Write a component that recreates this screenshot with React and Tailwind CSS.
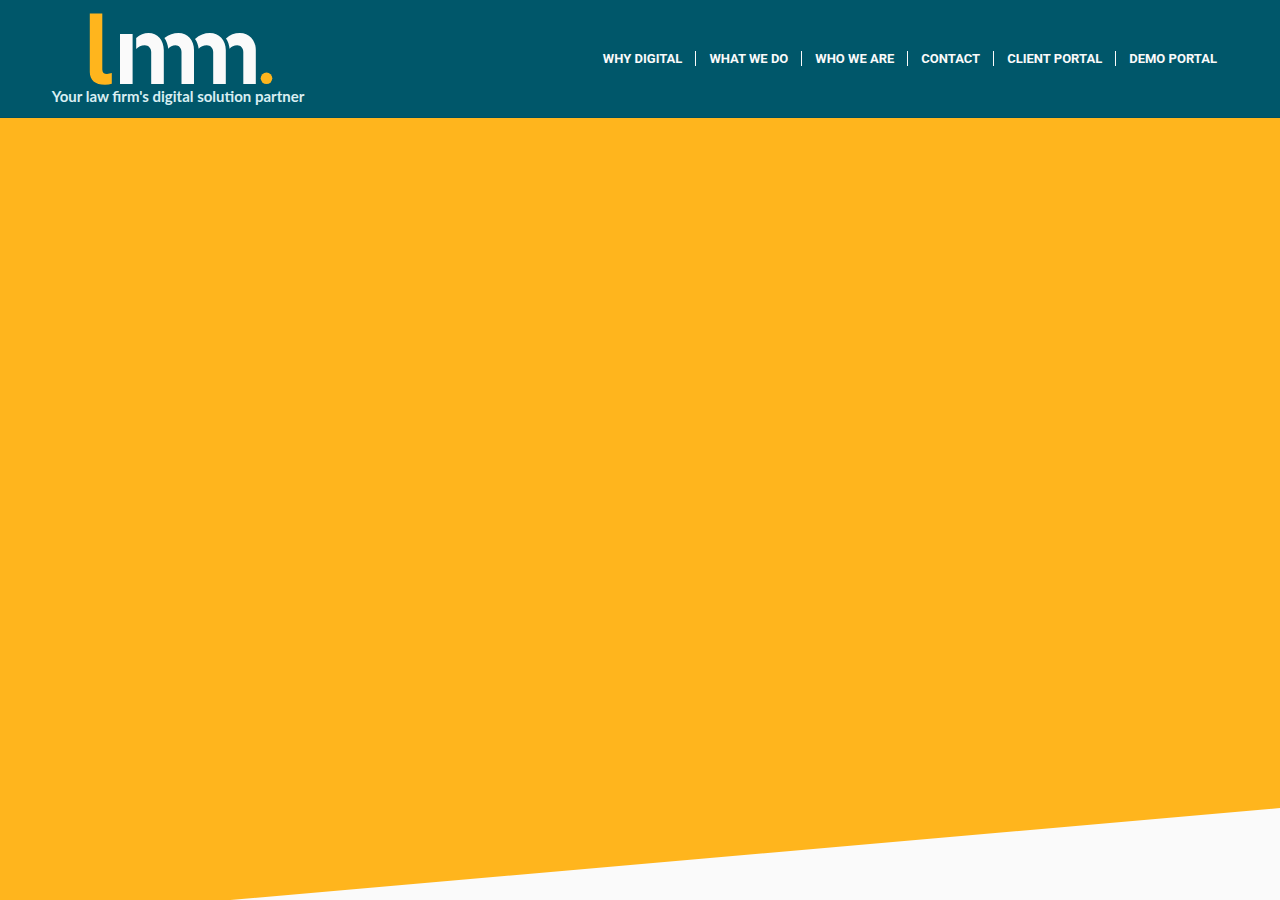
const links = [
  { label: "WHY DIGITAL", href: "#why-digital" },
  { label: "WHAT WE DO", href: "#what-we-do" },
  { label: "WHO WE ARE", href: "#who-we-are" },
  { label: "CONTACT", href: "#contact" },
  { label: "CLIENT PORTAL", href: "#client-portal" },
  { label: "DEMO PORTAL", href: "#demo-portal" },
];

function Logo() {
  return (
    <a href="#home" className="flex w-64 shrink-0 flex-col items-center">
      <svg viewBox="85 12 186 74" className="h-[74px] w-[186px] overflow-visible" aria-hidden="true">
        <path
          d="M89.8 13.5H102.3V69.5C102.3 72.5 104 74 107 74L111.8 73V83.8Q109 84.8 105 84.8C95 84.8 89.8 80 89.8 72Z"
          fill="#ffb51d"
        />
        <g fill="#fafafa">
          <rect x="120" y="34" width="12.6" height="50" />
          <path d="M136.2 38C140 34.5 144 33 148.5 33C157.5 33 163.8 40 163.8 50V84H151.2V52C151.2 48 148.5 45.2 144.8 45.2C141 45.2 138.5 46.5 136.2 49Z" />
          <path d="M164.4 38C169 34.5 173.5 33 178.5 33C187.5 33 194 40 194 50V84H181.5V52C181.5 48 179 45.2 175.5 45.2C172.5 45.2 170 46.5 168.3 48.7C167.8 44.5 166.5 41 164.4 38Z" />
          <path d="M195 39C199.5 34.8 204.5 33 209.8 33C219 33 225.8 40 225.8 50V84H213.2V52C213.2 48 210.5 45.2 206.8 45.2C203.5 45.2 200.5 46.5 198.7 48.7C198.2 45 197 41.5 195 39Z" />
          <path d="M226 38.5C230 34.8 234.5 33 239.8 33C249 33 255.8 40 255.8 50V84H243.3V52C243.3 48 240.8 45.2 237.2 45.2C234 45.2 231.3 46.5 229.6 48.7C229.2 45 228 41.5 226 38.5Z" />
        </g>
        <circle cx="266.5" cy="78.3" r="5.8" fill="#ffb51d" />
      </svg>
      <span className="whitespace-nowrap font-['Lato',sans-serif] text-[15px] leading-5 font-bold text-[#d9eef2]">
        Your law firm&apos;s digital solution partner
      </span>
    </a>
  );
}

function Header() {
  return (
    <header className="flex min-h-[118px] items-center justify-between border-b border-[#005062] bg-[#00576a] px-[50px]">
      <Logo />
      <nav aria-label="Main">
        <ul className="flex flex-wrap items-center divide-x divide-[#fafafa]">
          {links.map((link) => (
            <li key={link.label} className="flex px-[13px]">
              <a
                href={link.href}
                className="font-['Roboto',sans-serif] text-[13px] leading-[15px] font-bold whitespace-nowrap text-[#fafafa] hover:text-[#ffb51d]"
              >
                {link.label}
              </a>
            </li>
          ))}
        </ul>
      </nav>
    </header>
  );
}

export default function App() {
  return (
    <div className="flex min-h-screen flex-col bg-[#fafafa]">
      <Header />
      <main className="flex flex-1 flex-col justify-end bg-[#ffb51d]">
        {/* slanted edge of the next section */}
        <div className="h-23 bg-[#fafafa] [clip-path:polygon(18%_100%,100%_0,100%_100%)]" />
      </main>
    </div>
  );
}
